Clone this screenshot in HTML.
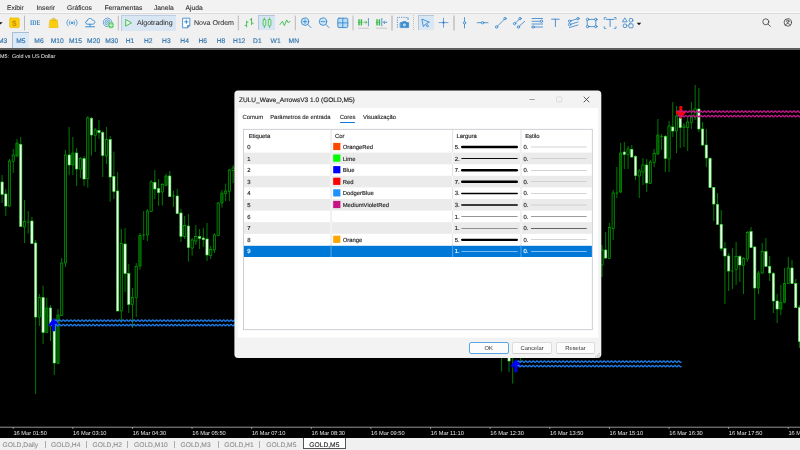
<!DOCTYPE html>
<html><head><meta charset="utf-8"><title>ZULU_Wave_ArrowsV3</title>
<style>
html,body{margin:0;padding:0;}
body{text-rendering:geometricPrecision;width:800px;height:450px;overflow:hidden;background:#f0f0f0;position:relative;font-family:"Liberation Sans",sans-serif;color:#222;}
.abs{position:absolute;white-space:nowrap;line-height:1;}
.menu{font-size:6.7px;top:5.95px;-webkit-text-stroke:0.08px #2a2a2a;color:#2a2a2a;}
.tf{font-size:6.7px;top:38.6px;-webkit-text-stroke:0.15px #2f74ad;color:#2f74ad;transform:translateX(-50%);}
.tbt{font-size:7.05px;top:20.4px;-webkit-text-stroke:0.06px #303030;color:#303030;}
#chart{position:absolute;left:0;top:49.5px;width:800px;height:388.5px;background:#000;}
svg{position:absolute;left:0;top:0;}
.w{stroke:#00b000;stroke-width:0.7;}
.u{fill:#001c00;stroke:#00c800;stroke-width:0.55;}
.d{fill:#f4fff4;stroke:#30e030;stroke-width:0.6;}
.f{fill:#005a00;stroke:#00a800;stroke-width:0.55;}
.ax{font-family:"Liberation Sans",sans-serif;font-size:5.7px;fill:#e6e6e6;}
#tabs{position:absolute;left:0;top:438px;width:800px;height:12px;background:#f0f0f0;}
.tab{font-size:6.7px;-webkit-text-stroke:0.1px currentColor;top:443px;color:#8e8e8e;}
.tsep{position:absolute;top:441px;width:0.8px;height:7.4px;background:#adadad;}
/* dialog */
#dlg{position:absolute;left:234.4px;top:90.6px;width:366.8px;height:267.4px;}
#dlg .title{display:none;}
#dlg .panel{display:none;}
.dt{font-size:5.9px;color:#2a2a2a;-webkit-text-stroke:0.12px #2a2a2a;}
.tbl{position:absolute;left:9.1px;top:38.6px;width:349.2px;height:200.8px;border:0.8px solid transparent;box-sizing:border-box;}
.row{position:absolute;left:0;width:347.6px;height:11.65px;}
.vsep{position:absolute;top:0;width:0.7px;background:#dcdcdc;}
.sw{position:absolute;left:89.3px;top:2.4px;width:6.4px;height:6.6px;}
.cell{position:absolute;font-size:5.9px;line-height:1;top:4.8px;color:#222;white-space:nowrap;-webkit-text-stroke:0.14px currentColor;}
.row svg{position:absolute;left:0;top:0;}

.btn{position:absolute;top:251.6px;height:11.4px;background:#fcfcfc;border:0.6px solid #dcdcdc;border-bottom-color:#cdcdcd;border-radius:2px;box-sizing:border-box;font-size:5.8px;line-height:12px;text-align:center;color:#2e2e2e;}
#root{position:absolute;left:0;top:0;width:800px;height:450px;will-change:transform;overflow:hidden;}
</style></head><body><div id="root">
<!-- menu -->
<div class="abs menu" style="left:7px">Exibir</div>
<div class="abs menu" style="left:36.5px">Inserir</div>
<div class="abs menu" style="left:67px">Gráficos</div>
<div class="abs menu" style="left:104.5px">Ferramentas</div>
<div class="abs menu" style="left:154px">Janela</div>
<div class="abs menu" style="left:185.5px">Ajuda</div>
<div class="abs" style="left:0;top:12.2px;width:800px;height:0.8px;background:#fbfbfb"></div><div class="abs" style="left:0;top:13px;width:800px;height:0.7px;background:#d9d9d9"></div>
<div class="abs" style="left:0;top:0;width:800px;height:12.2px;background:#f2f2f2;z-index:-1"></div>
<!-- toolbar highlights -->
<div class="abs" style="left:120.5px;top:15px;width:55.8px;height:15.6px;background:#d9e6f4;border-left:0.6px solid #bccde2;border-top:0.6px solid #bccde2;box-sizing:border-box"></div>
<div class="abs" style="left:258.3px;top:15.3px;width:16.8px;height:15.2px;background:#d6e4f3;border-left:0.6px solid #b5c6da;border-top:0.6px solid #b5c6da;box-sizing:border-box"></div>
<div class="abs" style="left:417.5px;top:15.3px;width:16.6px;height:15.2px;background:#d9e6f4;border-left:0.6px solid #b5c6da;border-top:0.6px solid #b5c6da;box-sizing:border-box"></div>
<div class="abs" style="left:12.2px;top:32.2px;width:16.8px;height:15.8px;background:#dce9f7;border-left:0.7px solid #a9bdd4;border-top:0.7px solid #a9bdd4;box-sizing:border-box"></div>
<div class="abs tbt" style="left:137px">Algotrading</div>
<div class="abs tbt" style="left:194px">Nova Ordem</div>
<div class="abs" style="left:30.1px;top:19.4px;font-family:'Liberation Serif',serif;font-weight:bold;font-size:7.3px;color:#3b86c2;transform:scaleX(0.8);transform-origin:0 0">IDE</div>
<!-- timeframes -->
<div class="abs tf" style="left:2.6px">M3</div>
<div class="abs tf" style="left:20.8px">M5</div>
<div class="abs tf" style="left:39px">M6</div>
<div class="abs tf" style="left:57.2px">M10</div>
<div class="abs tf" style="left:75.4px">M15</div>
<div class="abs tf" style="left:93.6px">M20</div>
<div class="abs tf" style="left:111.8px">M30</div>
<div class="abs tf" style="left:130px">H1</div>
<div class="abs tf" style="left:148.2px">H2</div>
<div class="abs tf" style="left:166.4px">H3</div>
<div class="abs tf" style="left:184.6px">H4</div>
<div class="abs tf" style="left:202.8px">H6</div>
<div class="abs tf" style="left:221px">H8</div>
<div class="abs tf" style="left:239.2px">H12</div>
<div class="abs tf" style="left:257.4px">D1</div>
<div class="abs tf" style="left:275.6px">W1</div>
<div class="abs tf" style="left:293.8px">MN</div>
<!-- toolbar icons -->
<svg id="tb" width="800" height="49" viewBox="0 0 800 49">
<g fill="none" stroke-linecap="round" stroke-linejoin="round">
<!-- dropdown arrow left -->
<path d="M-1.5 22.2H2.6L0.5 24.4Z" fill="#111" stroke="none"/>
<!-- $ icon -->
<rect x="9.7" y="18" width="9.5" height="9.6" rx="1.1" fill="#fccf0a" stroke="#e8b400" stroke-width="0.7"/>
<text x="14.4" y="25.7" text-anchor="middle" style="font-family:'Liberation Sans',sans-serif;font-weight:bold;font-size:8.2px;fill:#c98f00;stroke:none">$</text>
<!-- separators -->
<g stroke="#b9b9b9" stroke-width="1" stroke-linecap="butt">
<line x1="24.5" y1="15.6" x2="24.5" y2="30.4"/>
<line x1="118.3" y1="15.6" x2="118.3" y2="30.4"/>
<line x1="238.3" y1="15.6" x2="238.3" y2="30.4"/>
<line x1="295.3" y1="15.6" x2="295.3" y2="30.4"/>
<line x1="353" y1="15.6" x2="353" y2="30.4"/>
<line x1="392" y1="15.6" x2="392" y2="30.4" stroke-width="1.3"/>
<line x1="454" y1="15.6" x2="454" y2="30.4" stroke-width="1.3"/>
</g>
<line x1="413.5" y1="15.4" x2="413.5" y2="30.8" stroke="#8a8a8a" stroke-width="0.7" stroke-dasharray="0.7 1.25" stroke-linecap="butt"/>
<!-- bag -->
<path d="M50.2 19.9H57.2L58.1 27.5H49.4Z" fill="#fccf0a" stroke="#e8b400" stroke-width="0.6"/>
<path d="M51.8 20.4C51.8 17.2 54.2 17.2 54.2 20.4M53.2 20.4C53.2 17.2 55.6 17.2 55.6 20.4" stroke="#d8a800" stroke-width="0.6"/>
<!-- signal -->
<g stroke="#3b8ed0" stroke-width="0.8">
<circle cx="72" cy="22.8" r="0.9" fill="#3b8ed0"/>
<path d="M70 20.9C69 22 69 23.6 70 24.7M74 20.9C75 22 75 23.6 74 24.7"/>
<path d="M68.2 19.6C66.4 21.6 66.4 24 68.2 26M75.8 19.6C77.6 21.6 77.6 24 75.8 26"/>
</g>
<!-- cloud -->
<g stroke="#3b8ed0" stroke-width="1">
<path d="M87.4 24.2C85 24.2 84.8 21.2 87.2 21C87.4 18 91.6 17.6 92.4 20.2C95.4 19.8 95.8 24.2 93 24.2Z"/>
<path d="M90 24.4V26.6M85.6 26.8H94.6"/>
</g>
<!-- radar + green plus -->
<g stroke="#3b8ed0" stroke-width="0.75">
<circle cx="107.6" cy="22.4" r="4.3"/>
<circle cx="107.6" cy="22.4" r="2.6"/>
<circle cx="107.6" cy="22.4" r="1"/>
</g>
<circle cx="111" cy="25.2" r="3.1" fill="#3fc552" stroke="#f0f0f0" stroke-width="0.5"/>
<path d="M109.4 25.2H112.6M111 23.6V26.8" stroke="#fff" stroke-width="0.8"/>
<!-- play -->
<path d="M126 19.7L131.6 22.8L126 25.9Z" stroke="#3dbb4c" stroke-width="0.9" fill="#e6f6e6"/>
<!-- nova ordem doc -->
<path d="M183 18.2H189.8V25.4L187.4 27.8H183Z" fill="#fff" stroke="#2f80c8" stroke-width="0.8"/>
<path d="M189.8 25.4H187.4V27.8Z" fill="#2f80c8" stroke="#2f80c8" stroke-width="0.4"/>
<path d="M184.6 21.8H188M186.3 20.1V23.5" stroke="#2f80c8" stroke-width="0.9"/>
<!-- bar chart -->
<g stroke="#3dbb4c" stroke-width="0.9" stroke-linecap="butt">
<path d="M246.6 20.6V27.4M244.6 25.4H246.6M246.6 22.2H248.4"/>
<path d="M251.6 18V25M249.8 19.6H251.6M251.6 23.2H253.6"/>
</g>
<!-- candle icon -->
<g stroke="#3dbb4c" stroke-width="0.8" fill="#d6f3d8">
<path d="M264.4 18V27.6M269.6 18V27.6" />
<rect x="263.1" y="19.6" width="2.6" height="6.2" rx="0.6"/>
<rect x="268.3" y="19.6" width="2.6" height="6.2" rx="0.6"/>
</g>
<!-- line chart -->
<path d="M280 24.5L282.4 21.2L284.4 25.6L286.7 19.9L288 22.6L290 21.5" stroke="#3dbb4c" stroke-width="0.9"/>
<!-- zoom in -->
<g stroke="#2f80c8" stroke-width="0.85">
<circle cx="305" cy="21.6" r="3.7" fill="#cfe6fa"/>
<path d="M307.8 24.4L311 27.6"/>
<path d="M303.2 21.6H306.8M305 19.8V23.4" stroke-width="0.8"/>
<circle cx="323" cy="21.6" r="3.7" fill="#cfe6fa"/>
<path d="M325.8 24.4L329 27.6"/>
<path d="M321.2 21.6H324.8" stroke-width="0.8"/>
</g>
<!-- grid -->
<rect x="337.8" y="18.2" width="10" height="9.4" rx="1.2" fill="#b9ddf8" stroke="#2f80c8" stroke-width="0.85"/>
<path d="M342.8 18.2V27.6M337.8 22.9H347.8" stroke="#2f80c8" stroke-width="0.8"/>
<!-- autoscroll -->
<g stroke-linecap="butt">
<path d="M359 19.2V25.4M361.4 19.2V25.4" stroke="#3dbb4c" stroke-width="1.5"/>
<path d="M357.8 22.3H362.6" stroke="#3dbb4c" stroke-width="0.6"/>
<path d="M363.4 22.3H367M365.4 20.7L367 22.3L365.4 23.9" stroke="#3dbb4c" stroke-width="0.8"/>
<path d="M368.4 18V26.2" stroke="#2f80c8" stroke-width="0.8"/>
<path d="M358 28.2H369" stroke="#b5b5b5" stroke-width="0.7"/>
<path d="M377 19.2V25.4M379.4 19.2V25.4" stroke="#3dbb4c" stroke-width="1.5"/>
<path d="M375.8 22.3H380.4" stroke="#3dbb4c" stroke-width="0.6"/>
<path d="M381.8 18V26.2" stroke="#2f80c8" stroke-width="0.8"/>
<path d="M383.4 22.3H387.2M385 20.7L383.4 22.3L385 23.9" stroke="#2f80c8" stroke-width="0.8"/>
<path d="M376 28.2H387" stroke="#b5b5b5" stroke-width="0.7"/>
</g>
<!-- screenshot -->
<path d="M397.4 27.6V17.4H408" stroke="#2f80c8" stroke-width="0.8" stroke-dasharray="1.2 1.1" stroke-linecap="butt"/>
<path d="M408 17.4V20" stroke="#2f80c8" stroke-width="0.8" stroke-linecap="butt"/>
<path d="M400.4 22.6H402L402.8 21.6H406L406.8 22.6H408.6V27.6H400.4Z" fill="#3b8ed0" stroke="#2f80c8" stroke-width="0.6"/>
<circle cx="404.4" cy="25" r="1.4" fill="#e8f3fc" stroke="none"/>
<circle cx="404.4" cy="25" r="0.6" fill="#3b8ed0" stroke="none"/>
<!-- cursor -->
<path d="M422.2 19.2L429.4 22.2L426.4 23.4L428.6 26.2L427.4 27L425.4 24.2L423.6 26.4Z" fill="#cfe6fa" stroke="#2f80c8" stroke-width="0.8"/>
<!-- crosshair -->
<path d="M439 22.6H448M443.5 18.2V27.2" stroke="#2f80c8" stroke-width="0.7"/>
<circle cx="443.5" cy="22.6" r="1.15" fill="#2f80c8" stroke="none"/>
<!-- vline -->
<g stroke="#2f80c8" stroke-width="0.8" fill="#d8ebfa">
<path d="M464.5 17.6V28"/>
<circle cx="464.5" cy="22.8" r="1.2"/>
<path d="M477.2 22.7H488"/>
<circle cx="482.6" cy="22.7" r="1.2"/>
<path d="M496.6 27L505 18.6"/>
<circle cx="496.6" cy="27" r="1.2"/><circle cx="505" cy="18.6" r="1.2"/>
<path d="M514.6 23.6L520 18.6M518.4 27L524.6 21.4"/>
<circle cx="514.6" cy="23.6" r="1.2"/><circle cx="520" cy="18.6" r="1.2"/><circle cx="518.4" cy="27" r="1.2"/>
<!-- fibo -->
<path d="M532 18.5H542.6M532 21.3H542.6M532 24H542.6M532 27H542.6"/>
<circle cx="541.4" cy="21.3" r="1.2"/><circle cx="533.2" cy="27" r="1.2"/>
<!-- T -->
<path d="M551.6 19.2H559.2M555.4 19.2V26.6" stroke-width="0.85"/>
<!-- pitchfork -->
<path d="M569.4 21.2L578 18.6M569.4 24.6L578 22M569.4 27.6L578 25"/>
<circle cx="578" cy="18.6" r="1.2"/><circle cx="569.6" cy="21.2" r="1.2"/><circle cx="569.6" cy="24.6" r="1.2"/>
<!-- rect -->
<rect x="587.6" y="19.4" width="8.2" height="7.2" fill="none"/>
<circle cx="587.6" cy="19.4" r="1.2"/><circle cx="595.8" cy="19.4" r="1.2"/><circle cx="587.6" cy="26.6" r="1.2"/><circle cx="595.8" cy="26.6" r="1.2"/>
<!-- [T] -->
<path d="M606.2 19.4H614M610.1 19.4V26.4" stroke-width="0.85"/>
<path d="M604.2 19.4V17.6H606M614.2 17.6H616V19.4M616 26.6V28.4H614.2M606 28.4H604.2V26.6" stroke-width="0.7"/>
<!-- shapes -->
<path d="M625 18.2L627.2 21.8H622.8Z" fill="none"/>
<circle cx="631" cy="20.2" r="1.9" fill="none"/>
<circle cx="625" cy="25.8" r="1.9" fill="none"/>
<rect x="628.8" y="23.8" width="4.2" height="4" rx="0.9" fill="none"/>
</g>
<path d="M636.8 22.8H641.2L639 25.2Z" fill="#111" stroke="none"/>
<!-- search / user -->
<g stroke="#3c3c3c" stroke-width="0.8">
<circle cx="765.8" cy="21.8" r="3"/>
<path d="M768 24L770.4 26.4"/>
<circle cx="787.8" cy="22.4" r="3.7"/>
<circle cx="787.8" cy="21.2" r="1.2"/>
<path d="M785.4 25.2C785.8 22.8 789.8 22.8 790.2 25.2"/>
</g>
</g>

</svg>
<div class="abs" style="left:0;top:48.4px;width:800px;height:1.2px;background:#5e5e5e"></div>
<div id="chart"></div>
<svg id="cs" width="800" height="450" viewBox="0 0 800 450" style="pointer-events:none">
<text x="0" y="58.3" style="font-family:'Liberation Sans',sans-serif;font-size:5.45px;fill:#f0f0f0;white-space:pre">M5:  Gold vs US Dollar</text>
<g shape-rendering="auto">
<line x1="2.10" y1="175.0" x2="2.10" y2="203.0" class="w"/>
<rect x="0.95" y="182.0" width="2.3" height="12.4" class="d"/>
<line x1="5.83" y1="189.0" x2="5.83" y2="216.0" class="w"/>
<rect x="4.68" y="194.0" width="2.3" height="12.0" class="d"/>
<line x1="9.55" y1="159.0" x2="9.55" y2="207.0" class="w"/>
<rect x="8.40" y="161.0" width="2.3" height="45.0" class="u"/>
<line x1="13.28" y1="149.0" x2="13.28" y2="173.0" class="w"/>
<rect x="12.13" y="155.0" width="2.3" height="6.6" class="u"/>
<line x1="17.00" y1="139.0" x2="17.00" y2="157.0" class="w"/>
<rect x="15.85" y="143.0" width="2.3" height="13.0" class="f"/>
<line x1="20.73" y1="137.0" x2="20.73" y2="227.0" class="w"/>
<rect x="19.58" y="144.4" width="2.3" height="82.0" class="d"/>
<line x1="24.46" y1="200.0" x2="24.46" y2="243.0" class="w"/>
<rect x="23.31" y="221.6" width="2.3" height="5.4" class="u"/>
<line x1="28.18" y1="211.0" x2="28.18" y2="233.6" class="w"/>
<line x1="26.83" y1="222.0" x2="29.53" y2="222.0" class="w"/>
<line x1="31.91" y1="217.0" x2="31.91" y2="244.0" class="w"/>
<rect x="30.76" y="221.0" width="2.3" height="22.6" class="d"/>
<line x1="35.63" y1="240.0" x2="35.63" y2="394.0" class="w"/>
<rect x="34.48" y="243.0" width="2.3" height="74.0" class="d"/>
<line x1="39.36" y1="294.0" x2="39.36" y2="326.0" class="w"/>
<rect x="38.21" y="297.6" width="2.3" height="19.4" class="u"/>
<line x1="43.09" y1="285.6" x2="43.09" y2="344.0" class="w"/>
<rect x="41.94" y="297.6" width="2.3" height="34.8" class="d"/>
<line x1="46.81" y1="298.0" x2="46.81" y2="333.0" class="w"/>
<rect x="45.66" y="308.0" width="2.3" height="24.4" class="f"/>
<line x1="50.54" y1="305.0" x2="50.54" y2="341.0" class="w"/>
<rect x="49.39" y="308.0" width="2.3" height="18.0" class="d"/>
<line x1="54.26" y1="318.0" x2="54.26" y2="375.0" class="w"/>
<rect x="53.11" y="320.0" width="2.3" height="43.0" class="d"/>
<line x1="57.99" y1="309.0" x2="57.99" y2="364.0" class="w"/>
<rect x="56.84" y="315.0" width="2.3" height="48.6" class="f"/>
<line x1="61.72" y1="258.0" x2="61.72" y2="316.0" class="w"/>
<rect x="60.57" y="263.0" width="2.3" height="52.6" class="u"/>
<line x1="65.44" y1="150.0" x2="65.44" y2="267.0" class="w"/>
<rect x="64.29" y="155.0" width="2.3" height="108.0" class="u"/>
<line x1="69.17" y1="127.0" x2="69.17" y2="175.0" class="w"/>
<rect x="68.02" y="155.0" width="2.3" height="10.0" class="d"/>
<line x1="72.89" y1="137.0" x2="72.89" y2="175.0" class="w"/>
<rect x="71.74" y="153.0" width="2.3" height="12.0" class="f"/>
<line x1="76.62" y1="148.0" x2="76.62" y2="186.0" class="w"/>
<rect x="75.47" y="153.0" width="2.3" height="16.0" class="d"/>
<line x1="80.35" y1="157.0" x2="80.35" y2="178.0" class="w"/>
<rect x="79.20" y="158.4" width="2.3" height="10.6" class="u"/>
<line x1="84.07" y1="156.0" x2="84.07" y2="186.0" class="w"/>
<rect x="82.92" y="158.6" width="2.3" height="20.4" class="d"/>
<line x1="87.80" y1="116.0" x2="87.80" y2="187.6" class="w"/>
<rect x="86.65" y="118.0" width="2.3" height="60.4" class="u"/>
<line x1="91.52" y1="117.0" x2="91.52" y2="155.6" class="w"/>
<rect x="90.37" y="118.4" width="2.3" height="16.6" class="d"/>
<line x1="95.25" y1="128.0" x2="95.25" y2="152.0" class="w"/>
<rect x="94.10" y="130.0" width="2.3" height="5.6" class="u"/>
<line x1="98.98" y1="120.0" x2="98.98" y2="139.0" class="w"/>
<rect x="97.83" y="130.6" width="2.3" height="2.0" class="d"/>
<line x1="102.70" y1="131.0" x2="102.70" y2="177.0" class="w"/>
<rect x="101.55" y="132.6" width="2.3" height="22.8" class="d"/>
<line x1="106.43" y1="127.0" x2="106.43" y2="164.0" class="w"/>
<rect x="105.28" y="139.6" width="2.3" height="16.4" class="u"/>
<line x1="110.15" y1="136.0" x2="110.15" y2="201.6" class="w"/>
<rect x="109.00" y="139.6" width="2.3" height="37.4" class="d"/>
<line x1="113.88" y1="151.6" x2="113.88" y2="199.0" class="w"/>
<rect x="112.73" y="176.4" width="2.3" height="15.2" class="d"/>
<line x1="117.61" y1="172.0" x2="117.61" y2="311.0" class="w"/>
<rect x="116.46" y="191.0" width="2.3" height="120.0" class="d"/>
<line x1="121.33" y1="229.0" x2="121.33" y2="323.0" class="w"/>
<rect x="120.18" y="243.6" width="2.3" height="67.4" class="u"/>
<line x1="125.06" y1="228.0" x2="125.06" y2="292.0" class="w"/>
<rect x="123.91" y="244.0" width="2.3" height="29.6" class="d"/>
<line x1="128.78" y1="264.0" x2="128.78" y2="313.0" class="w"/>
<rect x="127.63" y="273.6" width="2.3" height="30.8" class="d"/>
<line x1="132.51" y1="288.0" x2="132.51" y2="328.0" class="w"/>
<rect x="131.36" y="297.6" width="2.3" height="6.8" class="u"/>
<line x1="136.24" y1="263.0" x2="136.24" y2="317.0" class="w"/>
<rect x="135.09" y="266.4" width="2.3" height="31.2" class="u"/>
<line x1="139.96" y1="233.0" x2="139.96" y2="269.6" class="w"/>
<rect x="138.81" y="235.6" width="2.3" height="30.4" class="f"/>
<line x1="143.69" y1="211.0" x2="143.69" y2="240.0" class="w"/>
<line x1="142.34" y1="235.0" x2="145.04" y2="235.0" class="w"/>
<line x1="147.41" y1="209.0" x2="147.41" y2="241.0" class="w"/>
<rect x="146.26" y="211.0" width="2.3" height="24.0" class="u"/>
<line x1="151.14" y1="180.0" x2="151.14" y2="212.0" class="w"/>
<rect x="149.99" y="182.0" width="2.3" height="29.6" class="u"/>
<line x1="154.87" y1="170.0" x2="154.87" y2="199.0" class="w"/>
<rect x="153.72" y="182.4" width="2.3" height="6.6" class="d"/>
<line x1="158.59" y1="179.0" x2="158.59" y2="206.0" class="w"/>
<rect x="157.44" y="188.6" width="2.3" height="4.0" class="d"/>
<line x1="162.32" y1="183.0" x2="162.32" y2="205.6" class="w"/>
<rect x="161.17" y="184.4" width="2.3" height="7.6" class="u"/>
<line x1="166.04" y1="174.0" x2="166.04" y2="186.0" class="w"/>
<rect x="164.89" y="176.0" width="2.3" height="9.6" class="f"/>
<line x1="169.77" y1="171.0" x2="169.77" y2="197.0" class="w"/>
<rect x="168.62" y="176.0" width="2.3" height="20.6" class="d"/>
<line x1="173.50" y1="191.0" x2="173.50" y2="207.0" class="w"/>
<line x1="172.15" y1="196.0" x2="174.85" y2="196.0" class="w"/>
<line x1="177.22" y1="189.0" x2="177.22" y2="214.0" class="w"/>
<rect x="176.07" y="196.0" width="2.3" height="17.6" class="d"/>
<line x1="180.95" y1="209.0" x2="180.95" y2="242.0" class="w"/>
<rect x="179.80" y="213.0" width="2.3" height="23.4" class="d"/>
<line x1="184.67" y1="216.0" x2="184.67" y2="239.0" class="w"/>
<rect x="183.52" y="225.6" width="2.3" height="10.8" class="u"/>
<line x1="188.40" y1="214.0" x2="188.40" y2="261.6" class="w"/>
<rect x="187.25" y="226.0" width="2.3" height="21.6" class="d"/>
<line x1="192.13" y1="238.0" x2="192.13" y2="255.6" class="w"/>
<rect x="190.98" y="240.0" width="2.3" height="8.0" class="u"/>
<line x1="195.85" y1="225.0" x2="195.85" y2="245.0" class="w"/>
<rect x="194.70" y="236.4" width="2.3" height="4.6" class="u"/>
<line x1="199.58" y1="229.0" x2="199.58" y2="249.0" class="w"/>
<rect x="198.43" y="236.6" width="2.3" height="1.8" class="d"/>
<line x1="203.30" y1="228.0" x2="203.30" y2="247.0" class="w"/>
<rect x="202.15" y="238.0" width="2.3" height="1.6" class="d"/>
<line x1="207.03" y1="223.0" x2="207.03" y2="261.0" class="w"/>
<rect x="205.88" y="239.0" width="2.3" height="16.0" class="d"/>
<line x1="210.76" y1="246.0" x2="210.76" y2="259.0" class="w"/>
<rect x="209.61" y="249.4" width="2.3" height="6.2" class="u"/>
<line x1="214.48" y1="233.0" x2="214.48" y2="253.0" class="w"/>
<rect x="213.33" y="235.0" width="2.3" height="15.0" class="u"/>
<line x1="218.21" y1="202.0" x2="218.21" y2="236.0" class="w"/>
<rect x="217.06" y="203.0" width="2.3" height="32.6" class="u"/>
<line x1="221.93" y1="190.0" x2="221.93" y2="207.6" class="w"/>
<rect x="220.78" y="193.0" width="2.3" height="10.0" class="f"/>
<line x1="225.66" y1="183.6" x2="225.66" y2="201.0" class="w"/>
<rect x="224.51" y="191.0" width="2.3" height="2.6" class="u"/>
<line x1="229.39" y1="169.0" x2="229.39" y2="201.0" class="w"/>
<rect x="228.24" y="170.0" width="2.3" height="21.6" class="u"/>
<line x1="233.11" y1="165.0" x2="233.11" y2="183.0" class="w"/>
<rect x="231.96" y="168.0" width="2.3" height="2.4" class="u"/>
<line x1="601.99" y1="245.0" x2="601.99" y2="277.0" class="w"/>
<rect x="600.84" y="250.0" width="2.3" height="15.0" class="u"/>
<line x1="605.71" y1="232.0" x2="605.71" y2="259.0" class="w"/>
<rect x="604.56" y="250.0" width="2.3" height="8.0" class="d"/>
<line x1="609.44" y1="223.0" x2="609.44" y2="259.0" class="w"/>
<rect x="608.29" y="227.6" width="2.3" height="30.8" class="u"/>
<line x1="613.16" y1="190.0" x2="613.16" y2="240.0" class="w"/>
<rect x="612.01" y="193.0" width="2.3" height="35.4" class="u"/>
<line x1="616.89" y1="167.0" x2="616.89" y2="198.0" class="w"/>
<line x1="615.54" y1="193.0" x2="618.24" y2="193.0" class="w"/>
<line x1="620.62" y1="143.0" x2="620.62" y2="193.0" class="w"/>
<rect x="619.47" y="153.0" width="2.3" height="39.0" class="f"/>
<line x1="624.34" y1="142.0" x2="624.34" y2="169.0" class="w"/>
<rect x="623.19" y="152.0" width="2.3" height="2.4" class="d"/>
<line x1="628.07" y1="146.0" x2="628.07" y2="169.0" class="w"/>
<rect x="626.92" y="149.0" width="2.3" height="5.4" class="u"/>
<line x1="631.79" y1="145.0" x2="631.79" y2="158.0" class="w"/>
<rect x="630.64" y="149.4" width="2.3" height="7.6" class="d"/>
<line x1="635.52" y1="155.0" x2="635.52" y2="180.0" class="w"/>
<rect x="634.37" y="156.4" width="2.3" height="19.2" class="d"/>
<line x1="639.25" y1="169.0" x2="639.25" y2="198.0" class="w"/>
<rect x="638.10" y="171.0" width="2.3" height="5.0" class="u"/>
<line x1="642.97" y1="158.0" x2="642.97" y2="185.0" class="w"/>
<rect x="641.82" y="165.0" width="2.3" height="7.0" class="u"/>
<line x1="646.70" y1="159.0" x2="646.70" y2="192.0" class="w"/>
<rect x="645.55" y="165.0" width="2.3" height="18.0" class="d"/>
<line x1="650.42" y1="160.0" x2="650.42" y2="184.0" class="w"/>
<rect x="649.27" y="162.0" width="2.3" height="21.6" class="u"/>
<line x1="654.15" y1="149.0" x2="654.15" y2="167.0" class="w"/>
<rect x="653.00" y="153.6" width="2.3" height="8.8" class="u"/>
<line x1="657.88" y1="119.0" x2="657.88" y2="155.0" class="w"/>
<rect x="656.73" y="135.0" width="2.3" height="19.0" class="f"/>
<line x1="661.60" y1="134.0" x2="661.60" y2="150.0" class="w"/>
<line x1="660.25" y1="136.5" x2="662.95" y2="136.5" class="w"/>
<line x1="665.33" y1="135.0" x2="665.33" y2="172.0" class="w"/>
<rect x="664.18" y="136.4" width="2.3" height="22.0" class="d"/>
<line x1="669.05" y1="121.0" x2="669.05" y2="172.0" class="w"/>
<rect x="667.90" y="126.0" width="2.3" height="33.0" class="u"/>
<line x1="672.78" y1="102.0" x2="672.78" y2="137.0" class="w"/>
<rect x="671.63" y="127.0" width="2.3" height="4.0" class="d"/>
<line x1="676.51" y1="106.0" x2="676.51" y2="153.0" class="w"/>
<rect x="675.36" y="116.0" width="2.3" height="15.0" class="u"/>
<line x1="680.23" y1="110.0" x2="680.23" y2="148.0" class="w"/>
<rect x="679.08" y="118.0" width="2.3" height="9.6" class="d"/>
<line x1="683.96" y1="123.0" x2="683.96" y2="147.0" class="w"/>
<rect x="682.81" y="126.0" width="2.3" height="1.6" class="u"/>
<line x1="687.68" y1="117.0" x2="687.68" y2="151.0" class="w"/>
<rect x="686.53" y="122.0" width="2.3" height="5.6" class="u"/>
<line x1="691.41" y1="102.0" x2="691.41" y2="129.0" class="w"/>
<rect x="690.26" y="117.0" width="2.3" height="5.4" class="u"/>
<line x1="695.14" y1="85.0" x2="695.14" y2="120.0" class="w"/>
<rect x="693.99" y="109.0" width="2.3" height="8.0" class="u"/>
<line x1="698.86" y1="88.0" x2="698.86" y2="132.0" class="w"/>
<rect x="697.71" y="109.0" width="2.3" height="20.0" class="d"/>
<line x1="702.59" y1="122.0" x2="702.59" y2="146.0" class="w"/>
<rect x="701.44" y="129.0" width="2.3" height="16.0" class="d"/>
<line x1="706.31" y1="129.0" x2="706.31" y2="167.0" class="w"/>
<rect x="705.16" y="145.0" width="2.3" height="13.0" class="d"/>
<line x1="710.04" y1="157.0" x2="710.04" y2="188.0" class="w"/>
<rect x="708.89" y="158.4" width="2.3" height="29.2" class="d"/>
<line x1="713.77" y1="187.0" x2="713.77" y2="221.0" class="w"/>
<rect x="712.62" y="187.6" width="2.3" height="16.4" class="d"/>
<line x1="717.49" y1="193.0" x2="717.49" y2="225.0" class="w"/>
<rect x="716.34" y="204.4" width="2.3" height="20.0" class="d"/>
<line x1="721.22" y1="210.0" x2="721.22" y2="251.0" class="w"/>
<rect x="720.07" y="224.4" width="2.3" height="24.0" class="d"/>
<line x1="724.94" y1="242.0" x2="724.94" y2="304.0" class="w"/>
<rect x="723.79" y="248.4" width="2.3" height="7.6" class="d"/>
<line x1="728.67" y1="253.0" x2="728.67" y2="291.0" class="w"/>
<rect x="727.52" y="256.0" width="2.3" height="15.0" class="d"/>
<line x1="732.40" y1="248.0" x2="732.40" y2="289.0" class="w"/>
<line x1="731.05" y1="271.0" x2="733.75" y2="271.0" class="w"/>
<line x1="736.12" y1="242.0" x2="736.12" y2="285.0" class="w"/>
<rect x="734.97" y="256.4" width="2.3" height="13.2" class="u"/>
<line x1="739.85" y1="255.0" x2="739.85" y2="282.0" class="w"/>
<rect x="738.70" y="256.4" width="2.3" height="8.6" class="d"/>
<line x1="743.57" y1="257.0" x2="743.57" y2="294.0" class="w"/>
<rect x="742.42" y="258.4" width="2.3" height="7.2" class="u"/>
<line x1="747.30" y1="231.0" x2="747.30" y2="262.0" class="w"/>
<rect x="746.15" y="232.4" width="2.3" height="26.6" class="u"/>
<line x1="751.03" y1="227.0" x2="751.03" y2="248.0" class="w"/>
<rect x="749.88" y="231.6" width="2.3" height="16.0" class="d"/>
<line x1="754.75" y1="246.0" x2="754.75" y2="320.0" class="w"/>
<rect x="753.60" y="247.0" width="2.3" height="41.0" class="d"/>
<line x1="758.48" y1="271.0" x2="758.48" y2="294.0" class="w"/>
<rect x="757.33" y="273.0" width="2.3" height="15.0" class="f"/>
<line x1="762.20" y1="243.0" x2="762.20" y2="274.0" class="w"/>
<rect x="761.05" y="251.6" width="2.3" height="21.4" class="u"/>
<line x1="765.93" y1="238.0" x2="765.93" y2="267.0" class="w"/>
<rect x="764.78" y="251.6" width="2.3" height="14.8" class="d"/>
<line x1="769.66" y1="256.0" x2="769.66" y2="281.0" class="w"/>
<rect x="768.51" y="266.4" width="2.3" height="6.6" class="d"/>
<line x1="773.38" y1="272.0" x2="773.38" y2="313.0" class="w"/>
<rect x="772.23" y="273.6" width="2.3" height="27.4" class="d"/>
<line x1="777.11" y1="294.0" x2="777.11" y2="323.0" class="w"/>
<rect x="775.96" y="301.0" width="2.3" height="8.0" class="d"/>
<line x1="780.83" y1="285.0" x2="780.83" y2="315.0" class="w"/>
<rect x="779.68" y="302.4" width="2.3" height="6.6" class="f"/>
<line x1="784.56" y1="268.0" x2="784.56" y2="303.0" class="w"/>
<rect x="783.41" y="283.6" width="2.3" height="18.8" class="f"/>
<line x1="788.29" y1="257.0" x2="788.29" y2="284.0" class="w"/>
<rect x="787.14" y="268.0" width="2.3" height="15.6" class="u"/>
<line x1="792.01" y1="260.0" x2="792.01" y2="284.0" class="w"/>
<rect x="790.86" y="268.0" width="2.3" height="15.6" class="d"/>
<line x1="795.74" y1="279.0" x2="795.74" y2="308.0" class="w"/>
<rect x="794.59" y="283.6" width="2.3" height="24.0" class="d"/>
<line x1="799.46" y1="305.0" x2="799.46" y2="348.0" class="w"/>
<rect x="798.31" y="307.6" width="2.3" height="34.0" class="d"/>
<!-- stubs below dialog -->
<line x1="501.6" y1="340" x2="501.6" y2="371.6" class="w"/>
<line x1="509" y1="340" x2="509" y2="372" class="w"/>
<rect x="507.9" y="340" width="2.3" height="21" class="d"/>
<line x1="512.7" y1="340" x2="512.7" y2="383.6" class="w"/>
<line x1="520.6" y1="340" x2="520.6" y2="362" class="w"/>
</g>
<!-- arrows -->
<path d="M53.7 331.2V322M49.4 325.8L53.7 320.4L58 325.8" fill="none" stroke="#0000ff" stroke-width="2.9"/>
<path d="M515.9 372.2V363M511.6 366.8L515.9 361.4L520.2 366.8" fill="none" stroke="#0000ff" stroke-width="2.9"/>
<path d="M680.8 106V115M676.5 111.2L680.8 116.6L685.1 111.2" fill="none" stroke="#ff0000" stroke-width="2.9"/>
<path d="M55.00 320.60 q0.931 -1.35 1.863 0 t1.863 0 t1.863 0 t1.863 0 t1.863 0 t1.863 0 t1.863 0 t1.863 0 t1.863 0 t1.863 0 t1.863 0 t1.863 0 t1.863 0 t1.863 0 t1.863 0 t1.863 0 t1.863 0 t1.863 0 t1.863 0 t1.863 0 t1.863 0 t1.863 0 t1.863 0 t1.863 0 t1.863 0 t1.863 0 t1.863 0 t1.863 0 t1.863 0 t1.863 0 t1.863 0 t1.863 0 t1.863 0 t1.863 0 t1.863 0 t1.863 0 t1.863 0 t1.863 0 t1.863 0 t1.863 0 t1.863 0 t1.863 0 t1.863 0 t1.863 0 t1.863 0 t1.863 0 t1.863 0 t1.863 0 t1.863 0 t1.863 0 t1.863 0 t1.863 0 t1.863 0 t1.863 0 t1.863 0 t1.863 0 t1.863 0 t1.863 0 t1.863 0 t1.863 0 t1.863 0 t1.863 0 t1.863 0 t1.863 0 t1.863 0 t1.863 0 t1.863 0 t1.863 0 t1.863 0 t1.863 0 t1.863 0 t1.863 0 t1.863 0 t1.863 0 t1.863 0 t1.863 0 t1.863 0 t1.863 0 t1.863 0 t1.863 0 t1.863 0 t1.863 0 t1.863 0 t1.863 0 t1.863 0 t1.863 0 t1.863 0 t1.863 0 t1.863 0 t1.863 0 t1.863 0 t1.863 0 t1.863 0 t1.863 0 t1.863 0 t1.863 0 t1.863 0 t1.863 0" fill="none" stroke="#1c7ce8" stroke-width="1.4"/>
<path d="M55.00 325.20 q0.931 -1.35 1.863 0 t1.863 0 t1.863 0 t1.863 0 t1.863 0 t1.863 0 t1.863 0 t1.863 0 t1.863 0 t1.863 0 t1.863 0 t1.863 0 t1.863 0 t1.863 0 t1.863 0 t1.863 0 t1.863 0 t1.863 0 t1.863 0 t1.863 0 t1.863 0 t1.863 0 t1.863 0 t1.863 0 t1.863 0 t1.863 0 t1.863 0 t1.863 0 t1.863 0 t1.863 0 t1.863 0 t1.863 0 t1.863 0 t1.863 0 t1.863 0 t1.863 0 t1.863 0 t1.863 0 t1.863 0 t1.863 0 t1.863 0 t1.863 0 t1.863 0 t1.863 0 t1.863 0 t1.863 0 t1.863 0 t1.863 0 t1.863 0 t1.863 0 t1.863 0 t1.863 0 t1.863 0 t1.863 0 t1.863 0 t1.863 0 t1.863 0 t1.863 0 t1.863 0 t1.863 0 t1.863 0 t1.863 0 t1.863 0 t1.863 0 t1.863 0 t1.863 0 t1.863 0 t1.863 0 t1.863 0 t1.863 0 t1.863 0 t1.863 0 t1.863 0 t1.863 0 t1.863 0 t1.863 0 t1.863 0 t1.863 0 t1.863 0 t1.863 0 t1.863 0 t1.863 0 t1.863 0 t1.863 0 t1.863 0 t1.863 0 t1.863 0 t1.863 0 t1.863 0 t1.863 0 t1.863 0 t1.863 0 t1.863 0 t1.863 0 t1.863 0 t1.863 0 t1.863 0 t1.863 0" fill="none" stroke="#1c7ce8" stroke-width="1.4"/>
<path d="M517.50 361.70 q0.931 -1.35 1.863 0 t1.863 0 t1.863 0 t1.863 0 t1.863 0 t1.863 0 t1.863 0 t1.863 0 t1.863 0 t1.863 0 t1.863 0 t1.863 0 t1.863 0 t1.863 0 t1.863 0 t1.863 0 t1.863 0 t1.863 0 t1.863 0 t1.863 0 t1.863 0 t1.863 0 t1.863 0 t1.863 0 t1.863 0 t1.863 0 t1.863 0 t1.863 0 t1.863 0 t1.863 0 t1.863 0 t1.863 0 t1.863 0 t1.863 0 t1.863 0 t1.863 0 t1.863 0 t1.863 0 t1.863 0 t1.863 0 t1.863 0 t1.863 0 t1.863 0 t1.863 0 t1.863 0 t1.863 0 t1.863 0 t1.863 0 t1.863 0 t1.863 0 t1.863 0 t1.863 0 t1.863 0 t1.863 0 t1.863 0 t1.863 0 t1.863 0 t1.863 0 t1.863 0 t1.863 0 t1.863 0 t1.863 0 t1.863 0 t1.863 0 t1.863 0 t1.863 0 t1.863 0 t1.863 0 t1.863 0 t1.863 0 t1.863 0 t1.863 0 t1.863 0 t1.863 0 t1.863 0 t1.863 0 t1.863 0 t1.863 0 t1.863 0 t1.863 0 t1.863 0 t1.863 0 t1.863 0 t1.863 0 t1.863 0 t1.863 0 t1.863 0 t1.863 0" fill="none" stroke="#1c7ce8" stroke-width="1.4"/>
<path d="M517.50 366.20 q0.931 -1.35 1.863 0 t1.863 0 t1.863 0 t1.863 0 t1.863 0 t1.863 0 t1.863 0 t1.863 0 t1.863 0 t1.863 0 t1.863 0 t1.863 0 t1.863 0 t1.863 0 t1.863 0 t1.863 0 t1.863 0 t1.863 0 t1.863 0 t1.863 0 t1.863 0 t1.863 0 t1.863 0 t1.863 0 t1.863 0 t1.863 0 t1.863 0 t1.863 0 t1.863 0 t1.863 0 t1.863 0 t1.863 0 t1.863 0 t1.863 0 t1.863 0 t1.863 0 t1.863 0 t1.863 0 t1.863 0 t1.863 0 t1.863 0 t1.863 0 t1.863 0 t1.863 0 t1.863 0 t1.863 0 t1.863 0 t1.863 0 t1.863 0 t1.863 0 t1.863 0 t1.863 0 t1.863 0 t1.863 0 t1.863 0 t1.863 0 t1.863 0 t1.863 0 t1.863 0 t1.863 0 t1.863 0 t1.863 0 t1.863 0 t1.863 0 t1.863 0 t1.863 0 t1.863 0 t1.863 0 t1.863 0 t1.863 0 t1.863 0 t1.863 0 t1.863 0 t1.863 0 t1.863 0 t1.863 0 t1.863 0 t1.863 0 t1.863 0 t1.863 0 t1.863 0 t1.863 0 t1.863 0 t1.863 0 t1.863 0 t1.863 0 t1.863 0 t1.863 0" fill="none" stroke="#1c7ce8" stroke-width="1.4"/>
<path d="M677.50 111.60 q0.931 -1.35 1.863 0 t1.863 0 t1.863 0 t1.863 0 t1.863 0 t1.863 0 t1.863 0 t1.863 0 t1.863 0 t1.863 0 t1.863 0 t1.863 0 t1.863 0 t1.863 0 t1.863 0 t1.863 0 t1.863 0 t1.863 0 t1.863 0 t1.863 0 t1.863 0 t1.863 0 t1.863 0 t1.863 0 t1.863 0 t1.863 0 t1.863 0 t1.863 0 t1.863 0 t1.863 0 t1.863 0 t1.863 0 t1.863 0 t1.863 0 t1.863 0 t1.863 0 t1.863 0 t1.863 0 t1.863 0 t1.863 0 t1.863 0 t1.863 0 t1.863 0 t1.863 0 t1.863 0 t1.863 0 t1.863 0 t1.863 0 t1.863 0 t1.863 0 t1.863 0 t1.863 0 t1.863 0 t1.863 0 t1.863 0 t1.863 0 t1.863 0 t1.863 0 t1.863 0 t1.863 0 t1.863 0 t1.863 0 t1.863 0 t1.863 0 t1.863 0 t1.863 0" fill="none" stroke="#c4168a" stroke-width="1.4"/>
<path d="M677.50 116.20 q0.931 -1.35 1.863 0 t1.863 0 t1.863 0 t1.863 0 t1.863 0 t1.863 0 t1.863 0 t1.863 0 t1.863 0 t1.863 0 t1.863 0 t1.863 0 t1.863 0 t1.863 0 t1.863 0 t1.863 0 t1.863 0 t1.863 0 t1.863 0 t1.863 0 t1.863 0 t1.863 0 t1.863 0 t1.863 0 t1.863 0 t1.863 0 t1.863 0 t1.863 0 t1.863 0 t1.863 0 t1.863 0 t1.863 0 t1.863 0 t1.863 0 t1.863 0 t1.863 0 t1.863 0 t1.863 0 t1.863 0 t1.863 0 t1.863 0 t1.863 0 t1.863 0 t1.863 0 t1.863 0 t1.863 0 t1.863 0 t1.863 0 t1.863 0 t1.863 0 t1.863 0 t1.863 0 t1.863 0 t1.863 0 t1.863 0 t1.863 0 t1.863 0 t1.863 0 t1.863 0 t1.863 0 t1.863 0 t1.863 0 t1.863 0 t1.863 0 t1.863 0 t1.863 0" fill="none" stroke="#c4168a" stroke-width="1.4"/>
<line x1="0" y1="427.2" x2="800" y2="427.2" stroke="#bdbdbd" stroke-width="0.8"/>
<rect x="234.4" y="90.6" width="366.9" height="267.3" rx="3.6" fill="#f3f3f3"/>
<rect x="237.8" y="108.1" width="360.4" height="229.4" fill="#fff"/>
<rect x="243.5" y="129.3" width="348.8" height="200.4" fill="#fff" stroke="#c2c4ca" stroke-width="0.8"/>
<line x1="331.05" y1="129.7" x2="331.05" y2="257.00" stroke="#d9d9d9" stroke-width="0.8"/>
<line x1="452.6" y1="129.7" x2="452.6" y2="257.00" stroke="#d9d9d9" stroke-width="0.8"/>
<line x1="521.0" y1="129.7" x2="521.0" y2="257.00" stroke="#d9d9d9" stroke-width="0.8"/>
<rect x="333.2" y="142.90" width="7.2" height="7.2" fill="#ff4500"/>
<rect x="243.9" y="152.60" width="348" height="11.60" fill="#ebebeb"/>
<line x1="331.05" y1="152.60" x2="331.05" y2="164.20" stroke="#fbfbfb" stroke-width="0.8"/>
<line x1="452.6" y1="152.60" x2="452.6" y2="164.20" stroke="#fbfbfb" stroke-width="0.8"/>
<line x1="521.0" y1="152.60" x2="521.0" y2="164.20" stroke="#fbfbfb" stroke-width="0.8"/>
<rect x="333.2" y="154.50" width="7.2" height="7.2" fill="#00ff00"/>
<rect x="333.2" y="166.10" width="7.2" height="7.2" fill="#0000ff"/>
<rect x="243.9" y="175.80" width="348" height="11.60" fill="#ebebeb"/>
<line x1="331.05" y1="175.80" x2="331.05" y2="187.40" stroke="#fbfbfb" stroke-width="0.8"/>
<line x1="452.6" y1="175.80" x2="452.6" y2="187.40" stroke="#fbfbfb" stroke-width="0.8"/>
<line x1="521.0" y1="175.80" x2="521.0" y2="187.40" stroke="#fbfbfb" stroke-width="0.8"/>
<rect x="333.2" y="177.70" width="7.2" height="7.2" fill="#ff0000"/>
<rect x="333.2" y="189.30" width="7.2" height="7.2" fill="#1e90ff"/>
<rect x="243.9" y="199.00" width="348" height="11.60" fill="#ebebeb"/>
<line x1="331.05" y1="199.00" x2="331.05" y2="210.60" stroke="#fbfbfb" stroke-width="0.8"/>
<line x1="452.6" y1="199.00" x2="452.6" y2="210.60" stroke="#fbfbfb" stroke-width="0.8"/>
<line x1="521.0" y1="199.00" x2="521.0" y2="210.60" stroke="#fbfbfb" stroke-width="0.8"/>
<rect x="333.2" y="200.90" width="7.2" height="7.2" fill="#c71585"/>
<rect x="243.9" y="222.20" width="348" height="11.60" fill="#ebebeb"/>
<line x1="331.05" y1="222.20" x2="331.05" y2="233.80" stroke="#fbfbfb" stroke-width="0.8"/>
<line x1="452.6" y1="222.20" x2="452.6" y2="233.80" stroke="#fbfbfb" stroke-width="0.8"/>
<line x1="521.0" y1="222.20" x2="521.0" y2="233.80" stroke="#fbfbfb" stroke-width="0.8"/>
<rect x="333.2" y="235.70" width="7.2" height="7.2" fill="#ffa500"/>
<rect x="243.9" y="245.80" width="348" height="11.20" fill="#0078d7"/>
<line x1="331.05" y1="245.40" x2="331.05" y2="257.00" stroke="#6fb3ee" stroke-width="0.8"/>
<line x1="452.6" y1="245.40" x2="452.6" y2="257.00" stroke="#6fb3ee" stroke-width="0.8"/>
<line x1="521.0" y1="245.40" x2="521.0" y2="257.00" stroke="#6fb3ee" stroke-width="0.8"/>
<line x1="13.20" y1="427" x2="13.20" y2="429" stroke="#bbb" stroke-width="0.7"/>
<text x="13.40" y="435.2" class="ax">16 Mar 01:50</text>
<line x1="72.82" y1="427" x2="72.82" y2="429" stroke="#bbb" stroke-width="0.7"/>
<text x="73.02" y="435.2" class="ax">16 Mar 03:10</text>
<line x1="132.44" y1="427" x2="132.44" y2="429" stroke="#bbb" stroke-width="0.7"/>
<text x="132.64" y="435.2" class="ax">16 Mar 04:30</text>
<line x1="192.06" y1="427" x2="192.06" y2="429" stroke="#bbb" stroke-width="0.7"/>
<text x="192.26" y="435.2" class="ax">16 Mar 05:50</text>
<line x1="251.68" y1="427" x2="251.68" y2="429" stroke="#bbb" stroke-width="0.7"/>
<text x="251.88" y="435.2" class="ax">16 Mar 07:10</text>
<line x1="311.30" y1="427" x2="311.30" y2="429" stroke="#bbb" stroke-width="0.7"/>
<text x="311.50" y="435.2" class="ax">16 Mar 08:30</text>
<line x1="370.92" y1="427" x2="370.92" y2="429" stroke="#bbb" stroke-width="0.7"/>
<text x="371.12" y="435.2" class="ax">16 Mar 09:50</text>
<line x1="430.54" y1="427" x2="430.54" y2="429" stroke="#bbb" stroke-width="0.7"/>
<text x="430.74" y="435.2" class="ax">16 Mar 11:10</text>
<line x1="490.16" y1="427" x2="490.16" y2="429" stroke="#bbb" stroke-width="0.7"/>
<text x="490.36" y="435.2" class="ax">16 Mar 12:30</text>
<line x1="549.78" y1="427" x2="549.78" y2="429" stroke="#bbb" stroke-width="0.7"/>
<text x="549.98" y="435.2" class="ax">16 Mar 13:50</text>
<line x1="609.40" y1="427" x2="609.40" y2="429" stroke="#bbb" stroke-width="0.7"/>
<text x="609.60" y="435.2" class="ax">16 Mar 15:10</text>
<line x1="669.02" y1="427" x2="669.02" y2="429" stroke="#bbb" stroke-width="0.7"/>
<text x="669.22" y="435.2" class="ax">16 Mar 16:30</text>
<line x1="728.64" y1="427" x2="728.64" y2="429" stroke="#bbb" stroke-width="0.7"/>
<text x="728.84" y="435.2" class="ax">16 Mar 17:50</text>
<line x1="788.26" y1="427" x2="788.26" y2="429" stroke="#bbb" stroke-width="0.7"/>
<text x="788.46" y="435.2" class="ax">16 Mar 19:10</text>
</svg>
<!-- bottom tabs -->
<div id="tabs"></div>
<div class="abs tab" style="left:2.5px">GOLD,Daily</div>
<div class="abs tab" style="left:51px">GOLD,H4</div>
<div class="abs tab" style="left:92.5px">GOLD,H2</div>
<div class="abs tab" style="left:134px">GOLD,M10</div>
<div class="abs tab" style="left:180.5px">GOLD,M3</div>
<div class="abs tab" style="left:224.3px">GOLD,H1</div>
<div class="abs tab" style="left:266.3px">GOLD,M5</div>
<div class="tsep" style="left:44.5px"></div>
<div class="tsep" style="left:85.7px"></div>
<div class="tsep" style="left:127px"></div>
<div class="tsep" style="left:173.7px"></div>
<div class="tsep" style="left:217.5px"></div>
<div class="tsep" style="left:259.2px"></div>
<div class="abs" style="left:303px;top:437.5px;width:42.8px;height:11.3px;background:#fff;border:0.8px solid #555;border-top:none;box-sizing:border-box"></div>
<div class="abs tab" style="left:309.3px;color:#222">GOLD,M5</div>
<!-- dialog -->
<div id="dlg">
<div class="title"></div>
<div class="panel"></div>
<div class="abs" style="left:4.6px;top:7.6px;font-size:6.55px;color:#1f1f1f;-webkit-text-stroke:0.15px #1f1f1f">ZULU_Wave_ArrowsV3 1.0 (GOLD,M5)</div>
<svg width="367" height="20" viewBox="0 0 367 20">
<line x1="295.4" y1="8.5" x2="300.8" y2="8.5" stroke="#8a8a8a" stroke-width="0.8"/>
<rect x="322.6" y="5.8" width="5.2" height="5.2" rx="0.8" fill="none" stroke="#cdcdcd" stroke-width="0.6"/>
<path d="M349.7 5.7L355.3 11.3M355.3 5.7L349.7 11.3" stroke="#333" stroke-width="0.8" fill="none"/>
</svg>
<div class="abs dt" style="left:8.1px;top:25.7px">Comum</div>
<div class="abs dt" style="left:35.8px;top:25.7px">Parâmetros de entrada</div>
<div class="abs dt" style="left:105.4px;top:25.7px">Cores</div>
<div class="abs dt" style="left:128.6px;top:25.7px">Visualização</div>
<div class="abs" style="left:105.3px;top:31.5px;width:15.8px;height:1.2px;background:#0a78d4;border-radius:0.6px"></div>
<div class="tbl">
<div class="cell" style="left:4.2px;top:4.8px">Etiqueta</div>
<div class="cell" style="left:90.4px;top:4.8px">Cor</div>
<div class="cell" style="left:212px;top:4.8px">Largura</div>
<div class="cell" style="left:280.7px;top:4.8px">Estilo</div>
<div class="row" style="top:11.00px">
<div class="cell" style="left:2.7px;color:#222">0</div>
<div class="cell" style="left:98.2px">OrangeRed</div>
<div class="cell" style="left:210.2px;color:#222">5.</div>
<div class="cell" style="left:279px;color:#222">0.</div>
</div>
<div class="row" style="top:22.60px">
<div class="cell" style="left:2.7px;color:#222">1</div>
<div class="cell" style="left:98.2px">Lime</div>
<div class="cell" style="left:210.2px;color:#222">2.</div>
<div class="cell" style="left:279px;color:#222">0.</div>
</div>
<div class="row" style="top:34.20px">
<div class="cell" style="left:2.7px;color:#222">2</div>
<div class="cell" style="left:98.2px">Blue</div>
<div class="cell" style="left:210.2px;color:#222">7.</div>
<div class="cell" style="left:279px;color:#222">0.</div>
</div>
<div class="row" style="top:45.80px">
<div class="cell" style="left:2.7px;color:#222">3</div>
<div class="cell" style="left:98.2px">Red</div>
<div class="cell" style="left:210.2px;color:#222">7.</div>
<div class="cell" style="left:279px;color:#222">0.</div>
</div>
<div class="row" style="top:57.40px">
<div class="cell" style="left:2.7px;color:#222">4</div>
<div class="cell" style="left:98.2px">DodgerBlue</div>
<div class="cell" style="left:210.2px;color:#222">3.</div>
<div class="cell" style="left:279px;color:#222">0.</div>
</div>
<div class="row" style="top:69.00px">
<div class="cell" style="left:2.7px;color:#222">5</div>
<div class="cell" style="left:98.2px">MediumVioletRed</div>
<div class="cell" style="left:210.2px;color:#222">3.</div>
<div class="cell" style="left:279px;color:#222">0.</div>
</div>
<div class="row" style="top:80.60px">
<div class="cell" style="left:2.7px;color:#222">6</div>
<div class="cell" style="left:210.2px;color:#222">1.</div>
<div class="cell" style="left:279px;color:#222">0.</div>
</div>
<div class="row" style="top:92.20px">
<div class="cell" style="left:2.7px;color:#222">7</div>
<div class="cell" style="left:210.2px;color:#222">1.</div>
<div class="cell" style="left:279px;color:#222">0.</div>
</div>
<div class="row" style="top:103.80px">
<div class="cell" style="left:2.7px;color:#222">8</div>
<div class="cell" style="left:98.2px">Orange</div>
<div class="cell" style="left:210.2px;color:#222">5.</div>
<div class="cell" style="left:279px;color:#222">0.</div>
</div>
<div class="row" style="top:115.40px">
<div class="cell" style="left:2.7px;color:#fff">9</div>
<div class="cell" style="left:210.2px;color:#fff">1.</div>
<div class="cell" style="left:279px;color:#fff">0.</div>
</div>
</div>
<div class="btn" style="left:234.4px;width:40px;border:0.9px solid #5aa5e4">OK</div>
<div class="btn" style="left:277.9px;width:39.7px">Cancelar</div>
<div class="btn" style="left:321.2px;width:39.7px">Resetar</div>
<svg width="367" height="268" viewBox="0 0 367 268" style="pointer-events:none">
<g fill="#9a9a9a"><rect x="364.6" y="262" width="0.9" height="0.9"/><rect x="362.8" y="263.8" width="0.9" height="0.9"/><rect x="364.6" y="263.8" width="0.9" height="0.9"/><rect x="361" y="265.6" width="0.9" height="0.9"/><rect x="362.8" y="265.6" width="0.9" height="0.9"/><rect x="364.6" y="265.6" width="0.9" height="0.9"/></g>
</svg>
</div>
<svg id="ov" width="800" height="450" viewBox="0 0 800 450" style="pointer-events:none">
<line x1="462.18" y1="147.00" x2="516.83" y2="147.00" stroke="#000" stroke-width="2.35" stroke-linecap="round"/>
<line x1="531" y1="147.00" x2="586.7" y2="147.00" stroke="#c9c9c9" stroke-width="0.8"/>
<line x1="461.80" y1="158.50" x2="517.20" y2="158.50" stroke="#000" stroke-width="0.95" stroke-linecap="round"/>
<line x1="531" y1="158.50" x2="586.7" y2="158.50" stroke="#c9c9c9" stroke-width="0.8"/>
<line x1="462.25" y1="170.20" x2="516.75" y2="170.20" stroke="#000" stroke-width="2.5" stroke-linecap="round"/>
<line x1="531" y1="170.50" x2="586.7" y2="170.50" stroke="#c9c9c9" stroke-width="0.8"/>
<line x1="462.25" y1="181.80" x2="516.75" y2="181.80" stroke="#000" stroke-width="2.5" stroke-linecap="round"/>
<line x1="531" y1="181.50" x2="586.7" y2="181.50" stroke="#c9c9c9" stroke-width="0.8"/>
<line x1="461.80" y1="193.40" x2="517.20" y2="193.40" stroke="#000" stroke-width="1.5" stroke-linecap="round"/>
<line x1="531" y1="193.50" x2="586.7" y2="193.50" stroke="#c9c9c9" stroke-width="0.8"/>
<line x1="461.80" y1="205.00" x2="517.20" y2="205.00" stroke="#000" stroke-width="1.5" stroke-linecap="round"/>
<line x1="531" y1="205.00" x2="586.7" y2="205.00" stroke="#c9c9c9" stroke-width="0.8"/>
<line x1="461.80" y1="216.50" x2="517.20" y2="216.50" stroke="#707070" stroke-width="0.75" stroke-linecap="round"/>
<line x1="531" y1="216.50" x2="586.7" y2="216.50" stroke="#858585" stroke-width="0.8"/>
<line x1="461.80" y1="228.50" x2="517.20" y2="228.50" stroke="#707070" stroke-width="0.75" stroke-linecap="round"/>
<line x1="531" y1="228.50" x2="586.7" y2="228.50" stroke="#404040" stroke-width="0.8"/>
<line x1="462.18" y1="239.80" x2="516.83" y2="239.80" stroke="#000" stroke-width="2.35" stroke-linecap="round"/>
<line x1="531" y1="239.50" x2="586.7" y2="239.50" stroke="#c9c9c9" stroke-width="0.8"/>
<line x1="461.80" y1="251.50" x2="517.20" y2="251.50" stroke="#9fd0ff" stroke-width="0.75" stroke-linecap="round"/>
<line x1="531" y1="251.50" x2="586.7" y2="251.50" stroke="#9fd0ff" stroke-width="0.8"/>
</svg>
</div></body></html>
